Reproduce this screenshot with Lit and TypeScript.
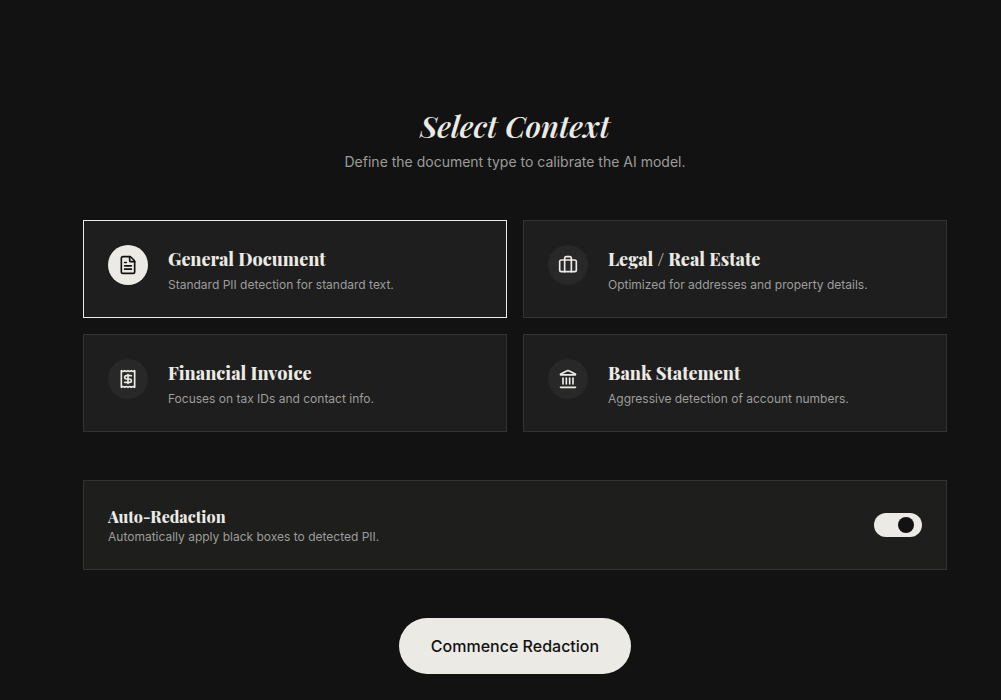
import { LitElement, html, css, svg } from "lit";
import { customElement, property, state } from "lit/decorators.js";

const icons: Record<string, unknown> = {
  file: svg`<path d="M6 22a2 2 0 0 1-2-2V4a2 2 0 0 1 2-2h8a2.4 2.4 0 0 1 1.704.706l3.588 3.588A2.4 2.4 0 0 1 20 8v12a2 2 0 0 1-2 2z"/><path d="M14 2v5a1 1 0 0 0 1 1h5"/><path d="M10 9H8"/><path d="M16 13H8"/><path d="M16 17H8"/>`,
  briefcase: svg`<path d="M16 20V4a2 2 0 0 0-2-2h-4a2 2 0 0 0-2 2v16"/><rect width="20" height="14" x="2" y="6" rx="2"/>`,
  receipt: svg`<path d="M4 2v20l2-1 2 1 2-1 2 1 2-1 2 1 2-1 2 1V2l-2 1-2-1-2 1-2-1-2 1-2-1-2 1Z"/><path d="M16 8h-6a2 2 0 1 0 0 4h4a2 2 0 1 1 0 4H8"/><path d="M12 17.5v-11"/>`,
  bank: svg`<path d="M11.12 2.198a2 2 0 0 1 1.76.006l7.866 3.847c.476.233.31.949-.22.949H3.474c-.53 0-.695-.716-.22-.949z"/><path d="M6 18v-7"/><path d="M10 18v-7"/><path d="M14 18v-7"/><path d="M18 18v-7"/><path d="M3 22h18"/>`,
};

const contexts = [
  { id: "general", icon: "file", title: "General Document", text: "Standard PII detection for standard text." },
  { id: "legal", icon: "briefcase", title: "Legal / Real Estate", text: "Optimized for addresses and property details." },
  { id: "invoice", icon: "receipt", title: "Financial Invoice", text: "Focuses on tax IDs and contact info." },
  { id: "bank", icon: "bank", title: "Bank Statement", text: "Aggressive detection of account numbers." },
];

@customElement("line-icon")
class LineIcon extends LitElement {
  @property() name = "file";

  static styles = css`
    :host { display: block; width: 20px; height: 20px; }
    .glyph {
      display: block; width: 100%; height: 100%; fill: none; stroke: currentColor;
      stroke-width: 2; stroke-linecap: round; stroke-linejoin: round;
    }
  `;

  render() {
    return html`<svg class="glyph" viewBox="0 0 24 24" aria-hidden="true">${icons[this.name]}</svg>`;
  }
}

@customElement("app-root")
class AppRoot extends LitElement {
  @state() selected = "general";
  @state() auto = true;

  static styles = css`
    :host {
      display: block; box-sizing: border-box; min-height: 100vh;
      padding: 108px 54px 26px 83px;
      background: #121212; color: #ebeae4;
      font-family: Inter, "Liberation Sans", sans-serif;
    }
    .page { display: flex; flex-direction: column; gap: 48px; max-width: 1024px; margin: 0 auto; }
    .head { text-align: center; }
    .title, .name, .label { font-family: "Playfair Display", "Liberation Serif", serif; margin: 0; font-weight: 800; }
    .title { font-size: 30px; line-height: 36px; font-style: italic; font-weight: 600; }
    .sub { margin: 8px 0 0; font-size: 14px; line-height: 20px; color: #9d9d9b; }
    .grid { display: grid; grid-template-columns: 1fr 1fr; gap: 16px; border: 0; margin: 0; padding: 0; min-width: 0; }
    .card {
      display: flex; gap: 20px; padding: 24px; border: 1px solid #333333;
      background: #1e1e1e; cursor: pointer; position: relative;
    }
    .card:has(.pick:checked) { border-color: #ebeae4; }
    .pick { position: absolute; opacity: 0; margin: 0; }
    .disc {
      display: grid; place-items: center; flex: none; width: 40px; height: 40px;
      border-radius: 50%; background: #282828;
    }
    .pick:checked + .disc { background: #ebeae4; color: #121212; }
    .name { display: block; font-size: 18px; line-height: 28px; }
    .text { display: block; font-size: 12px; line-height: 16px; color: #9d9d9b; }
    .name + .text { margin-top: 4px; }
    .panel {
      display: flex; align-items: center; justify-content: space-between; gap: 24px;
      padding: 24px; border: 1px solid #333333; background: #1e1e1c; cursor: pointer;
    }
    .label { display: block; font-size: 16px; line-height: 24px; }
    .switch {
      appearance: none; box-sizing: border-box; display: flex; flex: none; width: 48px; height: 24px; margin: 0;
      padding: 4px 8px; border-radius: 12px; background: #444444; cursor: pointer;
    }
    .switch::before { content: ""; width: 16px; height: 16px; border-radius: 50%; background: #121212; }
    .switch:checked { background: #ebeae4; justify-content: flex-end; }
    .go {
      align-self: center; border: 0; border-radius: 28px; padding: 16px 32px; background: #ebeae4;
      color: #121212; font-family: inherit; font-size: 16px; font-weight: 500; line-height: 24px; cursor: pointer;
    }
  `;

  render() {
    return html`
      <main class="page">
        <header class="head">
          <h1 class="title">Select Context</h1>
          <p class="sub">Define the document type to calibrate the AI model.</p>
        </header>
        <fieldset class="grid" aria-label="Select Context">
          ${contexts.map(
            (c) => html`
              <label class="card">
                <input class="pick" type="radio" name="context" .value=${c.id}
                  .checked=${this.selected === c.id} @change=${() => (this.selected = c.id)} />
                <span class="disc"><line-icon name=${c.icon}></line-icon></span>
                <span>
                  <span class="name">${c.title}</span>
                  <span class="text">${c.text}</span>
                </span>
              </label>
            `
          )}
        </fieldset>
        <label class="panel">
          <span>
            <span class="label">Auto-Redaction</span>
            <span class="text">Automatically apply black boxes to detected PII.</span>
          </span>
          <input class="switch" type="checkbox" role="switch" .checked=${this.auto}
            @change=${(e: Event) => (this.auto = (e.target as HTMLInputElement).checked)} />
        </label>
        <button class="go" type="button">Commence Redaction</button>
      </main>
    `;
  }
}
